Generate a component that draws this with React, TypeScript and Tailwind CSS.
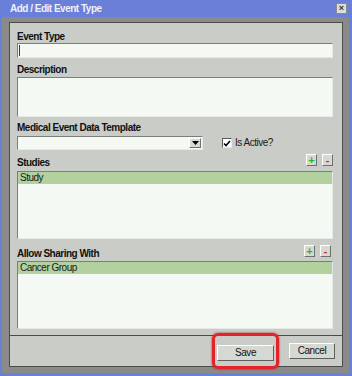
function PlusMinus() {
  return (
    <div className="flex gap-[5px]">
      <button
        className="flex h-[12px] w-[11px] items-center justify-center border border-t-white border-l-white border-b-[#6e706c] border-r-[#6e706c] bg-[#d6d8d4] text-[11px] font-bold leading-none text-[#14c414]"
        type="button"
      >
        +
      </button>
      <button
        className="flex h-[12px] w-[11px] items-center justify-center border border-t-white border-l-white border-b-[#6e706c] border-r-[#6e706c] bg-[#d6d8d4] text-[11px] font-bold leading-none text-[#e02020]"
        type="button"
      >
        -
      </button>
    </div>
  );
}

function ListBox({ item }: { item: string }) {
  return (
    <div className="h-[68px] border border-t-[#7c7e7a] border-l-[#7c7e7a] border-b-[#e6eae6] border-r-[#e6eae6] bg-[#f4f9f4]">
      <div className="h-[12px] bg-[#b2d19e] pl-[2px] text-[10px] leading-[12px] tracking-[-0.5px] text-[#1a1a1a]">
        {item}
      </div>
    </div>
  );
}

export default function App() {
  const label = 'text-[10px] font-bold leading-[12px] tracking-[-0.5px] text-[#111]';
  const sunken =
    'border border-t-[#7c7e7a] border-l-[#7c7e7a] border-b-[#e6eae6] border-r-[#e6eae6] bg-[#f4f9f4]';
  const raised =
    'h-[16px] border border-t-white border-l-white border-b-[#5e605c] border-r-[#5e605c] bg-[#d6d8d4] text-[10px] leading-none tracking-[-0.4px] text-[#111]';

  return (
    <div
      className="flex h-[376px] w-[352px] flex-col bg-[#6a80d8] pb-[3px] pl-[2px] pr-[3px]"
      style={{ fontFamily: '"Liberation Sans", Arial, sans-serif' }}
    >
      <div className="flex h-[17px] items-center justify-between pl-[8px] pr-[2px]">
        <span className="text-[10px] font-bold leading-none tracking-[-0.5px] text-[#eef0fa]">
          Add / Edit Event Type
        </span>
        <span className="flex h-[11px] w-[11px] items-center justify-center border border-[#8a8c88] bg-[#dcdeda] text-[9px] font-bold leading-none text-[#333]">
          ×
        </span>
      </div>
      <div className="flex flex-1 flex-col bg-[#8a8b89] pb-[6px] pl-[7px] pr-[6px] pt-[5px]">
        <div className="flex flex-1 flex-col border border-[#4c4d4b] bg-[#c9ccc7]">
          <div className="flex flex-col pl-[7px] pr-[9px] pt-[8px]">
            <div className={label}>Event Type</div>
            <div className={`${sunken} h-[15px] px-[1px]`}>
              <div className="mt-[1px] h-[11px] w-[1px] bg-[#2030d0]" />
            </div>

            <div className={`${label} mt-[6px]`}>Description</div>
            <div className={`${sunken} mt-[1px] h-[40px]`} />

            <div className={`${label} mt-[5px]`}>Medical Event Data Template</div>
            <div className="mt-[2px] flex h-[14px] items-center">
              <div className={`${sunken} flex h-[14px] w-[186px] justify-end p-[1px]`}>
                <div className="flex h-full w-[12px] items-center justify-center border border-t-white border-l-white border-b-[#6e706c] border-r-[#6e706c] bg-[#d6d8d4]">
                  <svg width="7" height="5" viewBox="0 0 7 5">
                    <path d="M0 0h7L3.5 4z" fill="#000" />
                  </svg>
                </div>
              </div>
              <div className="ml-[19px] flex items-center gap-[3px]">
                <div className="flex h-[10px] w-[10px] items-center justify-center border border-t-[#5a5c58] border-l-[#5a5c58] border-b-[#e6eae6] border-r-[#e6eae6] bg-white">
                  <svg width="8" height="7" viewBox="0 0 8 7">
                    <path d="M1 3.5l2 2L7 1" stroke="#000" strokeWidth="1.6" fill="none" />
                  </svg>
                </div>
                <span className="text-[10px] leading-none tracking-[-0.5px] text-[#1a1a1a]">Is Active?</span>
              </div>
            </div>

            <div className="mt-[4px] flex h-[15px] items-end justify-between">
              <div className={label}>Studies</div>
              <div className="self-start">
                <PlusMinus />
              </div>
            </div>
            <div className="mt-[2px]">
              <ListBox item="Study" />
            </div>

            <div className="mt-[6px] flex h-[15px] items-end justify-between">
              <div className={label}>Allow Sharing With</div>
              <div className="mr-[2px] self-start">
                <PlusMinus />
              </div>
            </div>
            <div className="mt-[1px]">
              <ListBox item="Cancer Group" />
            </div>
          </div>

          <div className="mt-auto flex h-[31px] items-center justify-end gap-[15px] border-t border-[#4c4d4b] pr-[7px]">
            <div className="relative">
              <span className="absolute -inset-x-[5px] -inset-y-[6px] rounded-[6px] border-[3px] border-[#e4222a] shadow-[0_0_2px_#a01010]" />
              <button className={`${raised} w-[57px]`} type="button">
                Save
              </button>
            </div>
            <button className={`${raised} w-[46px]`} type="button">
              Cancel
            </button>
          </div>
        </div>
      </div>
    </div>
  );
}
